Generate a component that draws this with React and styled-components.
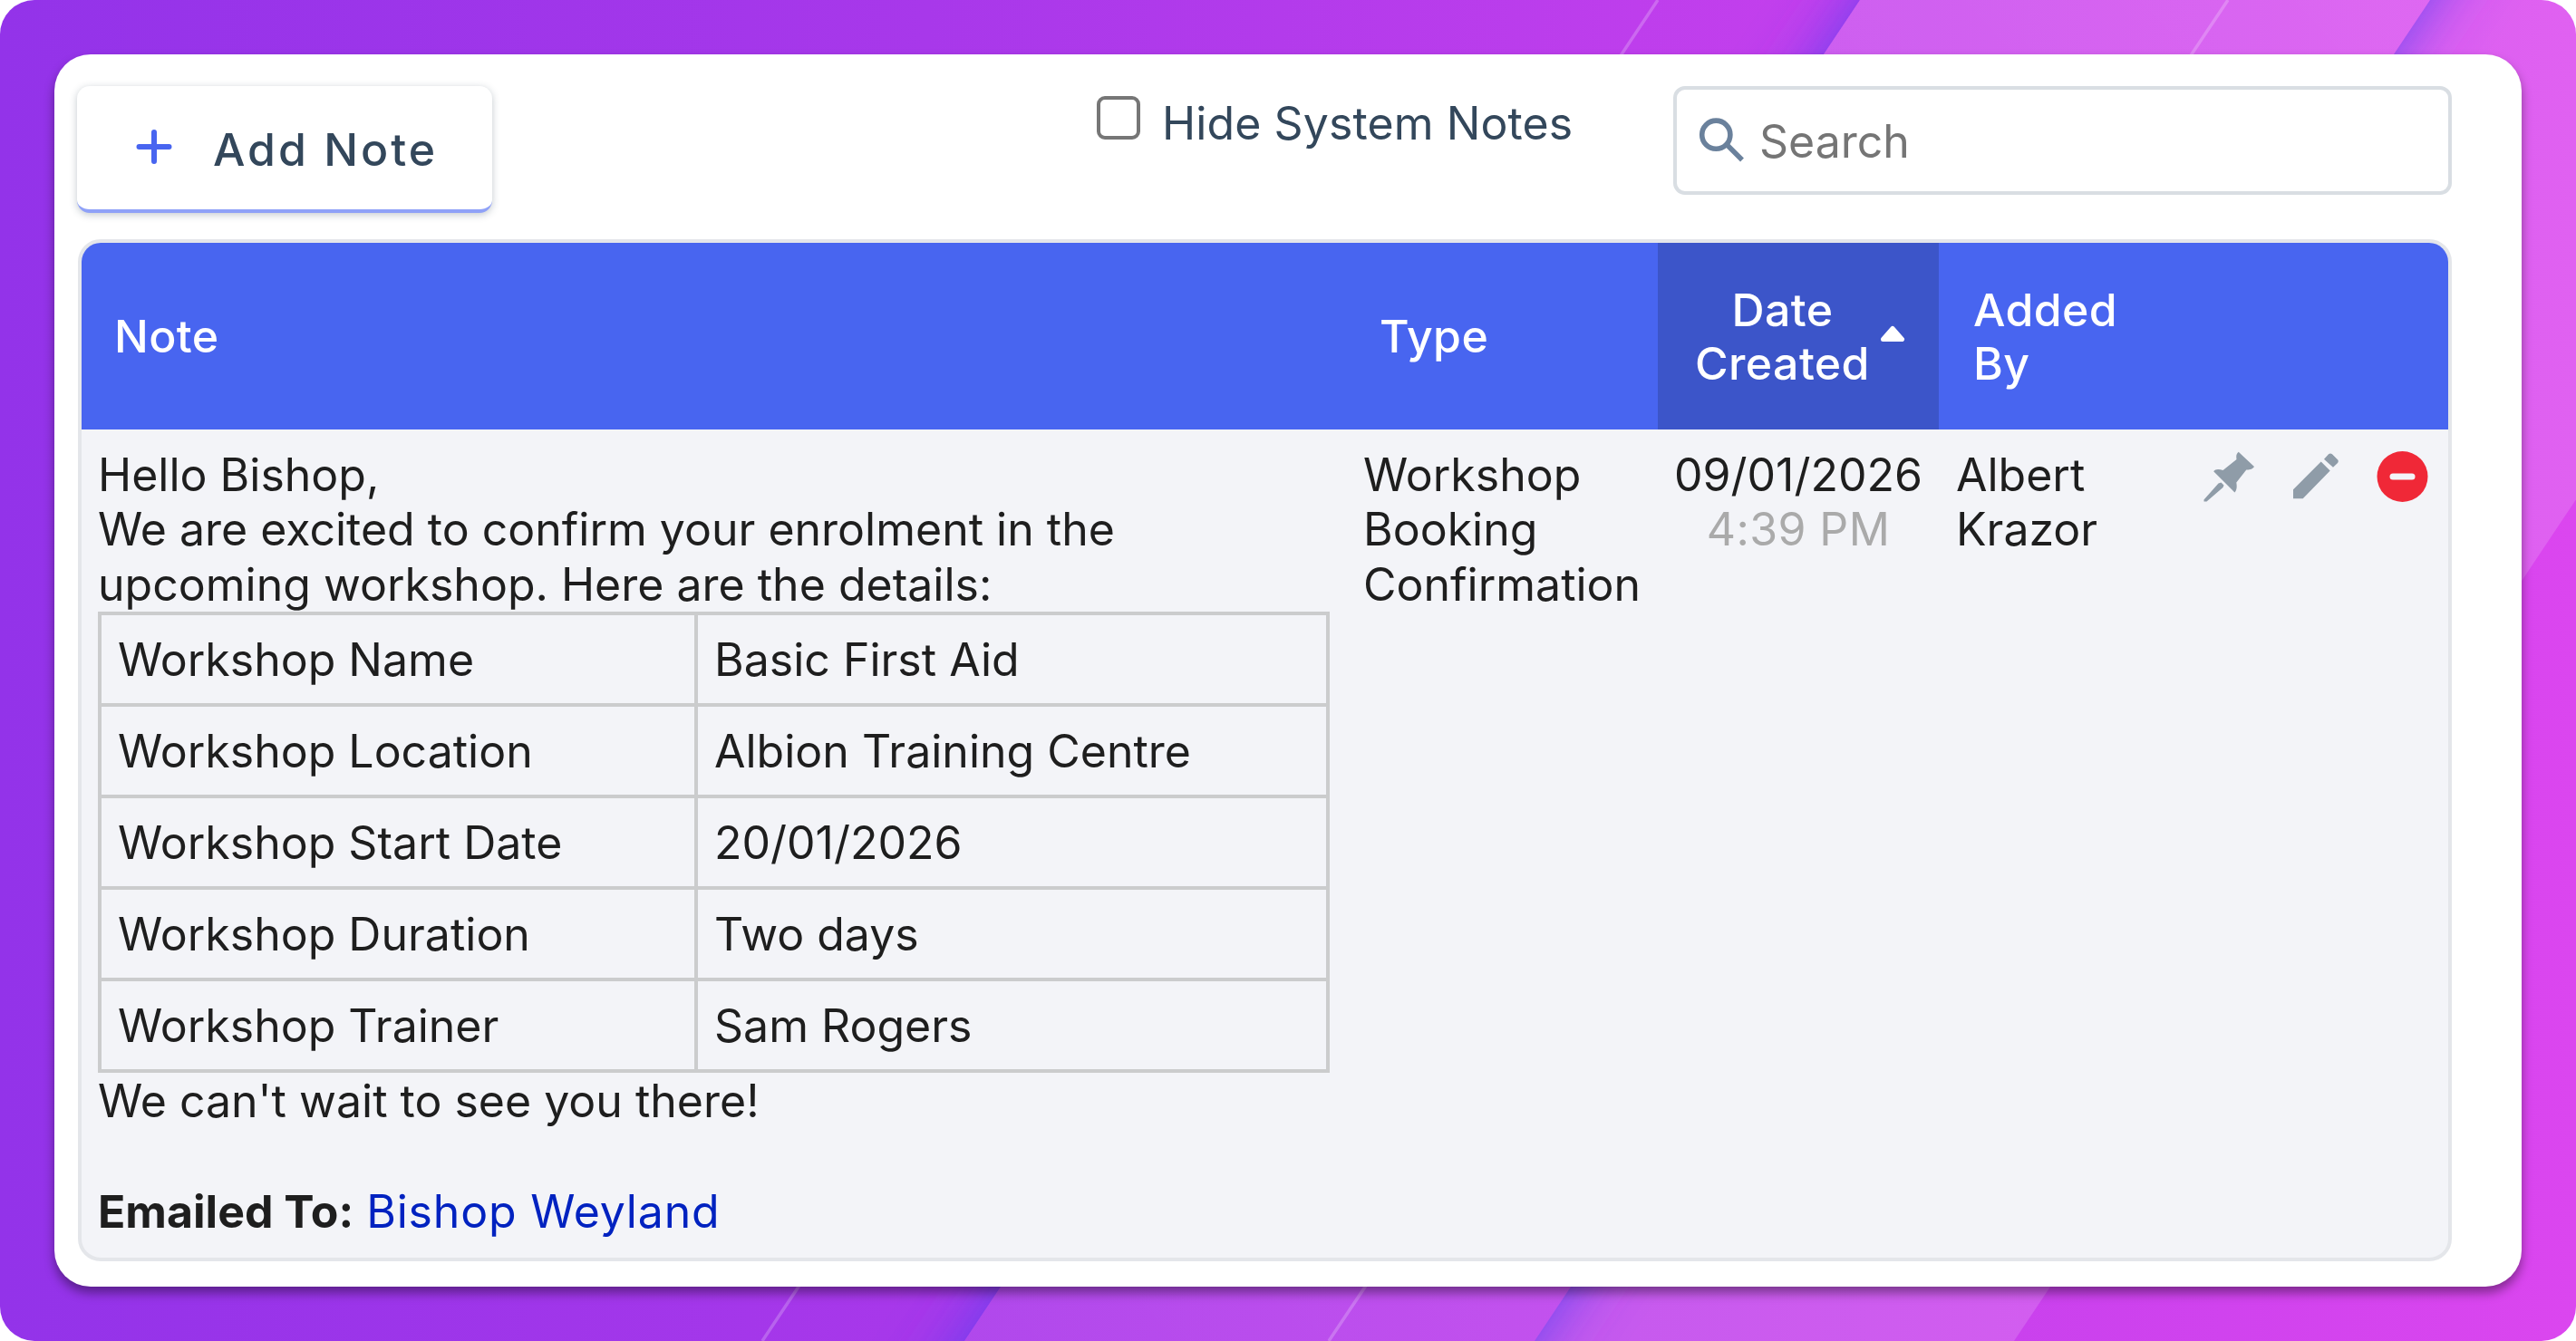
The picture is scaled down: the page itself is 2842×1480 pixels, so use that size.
import React, { useState } from 'react';
import styled, { createGlobalStyle, css } from 'styled-components';

const palette = {
	blue: '#4865f0',
	blueDark: '#3c55c9',
	blueSoft: '#8fa1f8',
	slate: '#33475b',
	text: '#1e1e1e',
	muted: '#aaaaaa',
	icon: '#8f9ca8',
	red: '#f02837',
	link: '#0022c0',
	row: '#f3f4f8',
	line: '#e4e6ea',
	cell: '#cbcccd',
};

const GlobalStyle = createGlobalStyle`
	* {
		box-sizing: border-box;
	}

	body {
		margin: 0;
		background: #ffffff;
		font-family: Inter, 'Liberation Sans', sans-serif;
		font-size: 50px;
		color: ${palette.text};
	}
`;

const Frame = styled.div`
	position: relative;
	width: 2842px;
	height: 1480px;
	padding: 60px;
	border-radius: 38px;
	overflow: hidden;
`;

const Backdrop = styled.svg`
	position: absolute;
	top: 0;
	left: 0;
	width: 100%;
	height: 100%;
`;

const Panel = styled.div`
	position: relative;
	height: 1360px;
	padding: 35px 77px 28px 26px;
	border-radius: 40px;
	background: #ffffff;
	box-shadow: 0 7px 12px rgba(0, 0, 0, 0.4);
`;

const Toolbar = styled.div`
	display: flex;
	align-items: flex-start;
	height: 169px;
`;

const AddButton = styled.button`
	display: flex;
	align-items: center;
	width: 458px;
	height: 140px;
	margin-left: -1px;
	padding: 4px 0 0 61px;
	border: 0;
	border-bottom: 4px solid ${palette.blueSoft};
	border-radius: 14px;
	background: #ffffff;
	box-shadow: 0 2px 9px rgba(40, 60, 80, 0.28);
	font-family: inherit;
	font-size: 50px;
	font-weight: 500;
	letter-spacing: 3px;
	color: ${palette.slate};
	cursor: pointer;

	svg {
		width: 48px;
		height: 48px;
		margin: -6px 41px 0 0;
	}
`;

const CheckLabel = styled.label`
	display: flex;
	align-items: flex-start;
	margin: 11px 0 0 667px;
	letter-spacing: 0.1px;
	color: ${palette.slate};
	cursor: pointer;
`;

const CheckInput = styled.input`
	appearance: none;
	width: 48px;
	height: 48px;
	margin: 0 24px 0 0;
	border: 4px solid #767676;
	border-radius: 9px;
	background: ${({ checked }) => (checked ? palette.blue : '#ffffff')};
`;

const SearchBox = styled.div`
	display: flex;
	align-items: center;
	width: 859px;
	height: 120px;
	margin-left: auto;
	padding-left: 24px;
	border: 4px solid #d9dee3;
	border-radius: 13px;

	svg {
		flex: none;
		width: 52px;
		height: 52px;
	}
`;

const SearchInput = styled.input`
	flex: 1;
	min-width: 0;
	margin-left: 15px;
	padding: 2px 0 0;
	border: 0;
	outline: none;
	background: none;
	font-family: inherit;
	font-size: 50px;

	&::placeholder {
		color: #757575;
	}
`;

const NotesTable = styled.div`
	display: flex;
	flex-direction: column;
	height: 1128px;
	border: 4px solid ${palette.line};
	border-radius: 25px;
	background: ${palette.row};
	overflow: hidden;
`;

const columns = css`
	display: grid;
	grid-template-columns: 1396px 343px 310px 270px 1fr;
`;

const HeadRow = styled.div`
	${columns}
	height: 205.500px;
	background: ${palette.blue};
	color: #ffffff;
	font-weight: 500;
	line-height: 59px;
	letter-spacing: 0.4px;
`;

const HeadCell = styled.div`
	display: flex;
	align-items: center;
	padding: 2px ${({ $pad }) => $pad || 36}px 0;

	${({ $sorted }) =>
		$sorted &&
		css`
			justify-content: space-between;
			padding: 2px 37px 0 41px;
			background: ${palette.blueDark};
			text-align: center;
		`}
`;

const SortArrow = styled.svg`
	width: 28px;
	height: 20px;
	margin-top: -5px;
`;

const BodyRow = styled.div`
	${columns}
	flex: 1;
	line-height: 60.7px;
`;

const BodyCell = styled.div`
	padding: 20px 0 0 ${({ $pad }) => $pad || 18}px;

	${({ $centered }) =>
		$centered &&
		css`
			padding-left: 0;
			text-align: center;
		`}
`;

const Time = styled.div`
	letter-spacing: 0.4px;
	color: ${palette.muted};
`;

const Message = styled.p`
	width: 1180px;
	margin: 0;
`;

const DetailTable = styled.table`
	width: 1359px;
	margin: -1px 0 1px;
	border-collapse: collapse;

	td {
		height: 101px;
		padding: 2px 18px 0;
		border: 4px solid ${palette.cell};
	}

	td:first-child {
		width: 658px;
	}
`;

const EmailedTo = styled.p`
	margin: 62px 0 0;

	a {
		letter-spacing: 0.8px;
		color: ${palette.link};
		text-decoration: none;
	}
`;

const Actions = styled.div`
	display: flex;
	gap: 38px;
	padding: 23.500px 0 0 21px;

	svg {
		width: 58px;
		height: 58px;
		cursor: pointer;
	}
`;

const details = [
	['Workshop Name', 'Basic First Aid'],
	['Workshop Location', 'Albion Training Centre'],
	['Workshop Start Date', '20/01/2026'],
	['Workshop Duration', 'Two days'],
	['Workshop Trainer', 'Sam Rogers'],
];

function Stripes() {
	return (
		<Backdrop viewBox="0 0 2842 1480" preserveAspectRatio="none">
			<defs>
				<linearGradient id="base" gradientUnits="userSpaceOnUse" x1="0" y1="0" x2="2842" y2="0">
					<stop offset="0" stopColor="#9333e9" />
					<stop offset="0.36" stopColor="#a838ea" />
					<stop offset="1" stopColor="#db46ef" />
				</linearGradient>
				<linearGradient id="sheen" gradientUnits="userSpaceOnUse" x1="1060" y1="1480" x2="2680" y2="0">
					<stop offset="0" stopColor="#ffffff" stopOpacity="0.08" />
					<stop offset="1" stopColor="#ffffff" stopOpacity="0.19" />
				</linearGradient>
				<filter id="soft" x="-20%" y="-20%" width="140%" height="140%">
					<feGaussianBlur stdDeviation="34" />
				</filter>
			</defs>
			<rect width="2842" height="1480" fill="url(#base)" />
			<polygon points="2052,0 3210,0 2222,1480 1064,1480" fill="#ffffff" fillOpacity="0.15" />
			<polygon
				points="2185,-200 2814,-200 1560,1680 931,1680"
				fill="#5542f0"
				fillOpacity="0.82"
				filter="url(#soft)"
			/>
			<polygon points="2052,0 2681,0 1693,1480 1064,1480" fill="url(#base)" />
			<polygon points="2052,0 2681,0 1693,1480 1064,1480" fill="url(#sheen)" />
			<path d="M1829 0L841 1480M2458 0L1466 1480" stroke="#ffffff" strokeOpacity="0.22" strokeWidth="3.5" />
		</Backdrop>
	);
}

export default function App() {
	const [hidden, setHidden] = useState(false);
	const [query, setQuery] = useState('');

	return (
		<>
			<GlobalStyle />
			<Frame>
				<Stripes />
				<Panel>
					<Toolbar>
						<AddButton>
							<svg viewBox="0 0 48 48" fill="none" stroke={palette.blue} strokeWidth="6" strokeLinecap="round">
								<path d="M24 8v32M7.500 24h33" />
							</svg>
							Add Note
						</AddButton>
						<CheckLabel>
							<CheckInput type="checkbox" checked={hidden} onChange={() => setHidden(!hidden)} />
							Hide System Notes
						</CheckLabel>
						<SearchBox>
							<svg viewBox="0 0 52 52" fill="none" stroke="#6a819c">
								<circle cx="19.300" cy="19.700" r="15.600" strokeWidth="5.600" />
								<path d="M31 30.500L48 47.500" strokeWidth="5.400" />
							</svg>
							<SearchInput placeholder="Search" value={query} onChange={e => setQuery(e.target.value)} />
						</SearchBox>
					</Toolbar>
					<NotesTable>
						<HeadRow>
							<HeadCell>Note</HeadCell>
							<HeadCell>Type</HeadCell>
							<HeadCell $sorted>
								<span>
									Date
									<br />
									Created
								</span>
								<SortArrow viewBox="0 0 28 20">
									<path
										d="M14 3.500L24.500 15.500H3.500z"
										fill="#ffffff"
										stroke="#ffffff"
										strokeWidth="5"
										strokeLinejoin="round"
									/>
								</SortArrow>
							</HeadCell>
							<HeadCell $pad={38}>
								Added
								<br />
								By
							</HeadCell>
							<HeadCell />
						</HeadRow>
						<BodyRow>
							<BodyCell>
								<Message>
									Hello Bishop,
									<br />
									We are excited to confirm your enrolment in the upcoming workshop. Here are the details:
								</Message>
								<DetailTable>
									<tbody>
										{details.map(([label, value]) => (
											<tr key={label}>
												<td>{label}</td>
												<td>{value}</td>
											</tr>
										))}
									</tbody>
								</DetailTable>
								<Message>We can't wait to see you there!</Message>
								<EmailedTo>
									<b>Emailed To:</b> <a href="#bishop">Bishop Weyland</a>
								</EmailedTo>
							</BodyCell>
							<BodyCell>
								Workshop
								<br />
								Booking
								<br />
								Confirmation
							</BodyCell>
							<BodyCell $centered>
								09/01/2026
								<Time>4:39 PM</Time>
							</BodyCell>
							<BodyCell $pad={19}>
								Albert
								<br />
								Krazor
							</BodyCell>
							<Actions>
								<svg viewBox="0 0 58 58" fill={palette.icon}>
									<path d="M39.700 1.800L57 18C54.500 21.500 51 21.500 48.300 21.500L37.300 35.500C38 40 38 43.500 35.500 46.500L12.200 23.200C14 20.500 18 20.500 22.500 22L37.500 10C37 6.500 37 4 39.700 1.800zM20.500 35.500L23.500 38.500L22.500 41L4.500 56.500H1.500V54.500L17.500 36.500z" />
								</svg>
								<svg viewBox="0 0 58 58" fill={palette.icon}>
									<path d="M4 43.200L34.700 12.500L44.700 22.500L14.700 53.200H4zM38 9.800L43 4.300Q45 2.600 47 4.300L53 10.300Q54.500 12 53 14L48 18.800z" />
								</svg>
								<svg viewBox="0 0 58 58">
									<circle cx="28.500" cy="29" r="28" fill={palette.red} />
									<rect x="14.500" y="25.600" width="28" height="7" rx="3.500" fill={palette.row} />
								</svg>
							</Actions>
						</BodyRow>
					</NotesTable>
				</Panel>
			</Frame>
		</>
	);
}
